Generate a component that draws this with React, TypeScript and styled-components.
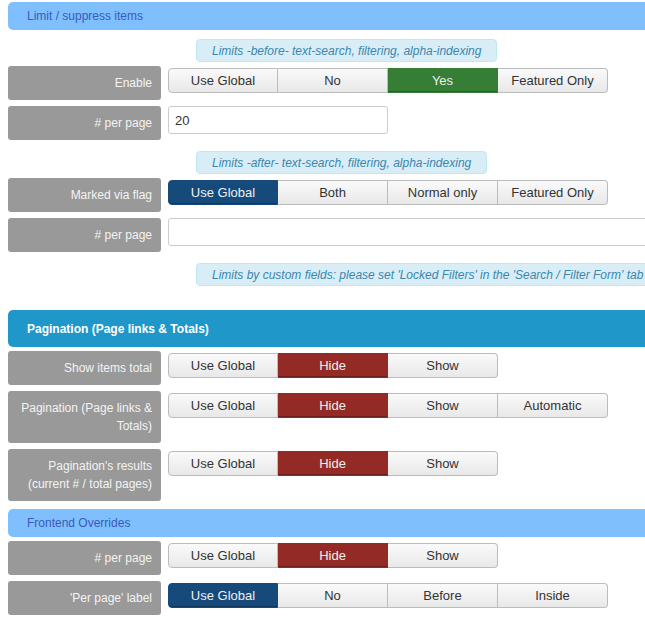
import React from "react";
import styled, { createGlobalStyle } from "styled-components";

const GlobalStyle = createGlobalStyle`
  body {
    margin: 0;
    background: #fff;
    overflow: hidden;
    font-family: "Liberation Sans", Arial, sans-serif;
    font-size: 13px;
    color: #333;
  }
`;

type Tone = "light" | "strong";
type Active = "success" | "danger" | "primary";

interface Choice {
  label: string;
  active?: Active;
}

const Page = styled.div`
  width: 760px;
  padding: 2px 0 0 8px;
`;

const Header = styled.div<{ $tone: Tone }>`
  display: flex;
  align-items: center;
  height: ${(p) => (p.$tone === "strong" ? "37px" : "28px")};
  padding-left: 19px;
  border-radius: 5px;
  background: ${(p) => (p.$tone === "strong" ? "#1f97c9" : "#7fbffd")};
  color: ${(p) => (p.$tone === "strong" ? "#fff" : "#3a5ab8")};
  font-weight: ${(p) => (p.$tone === "strong" ? "bold" : "normal")};
  font-size: 12px;
  margin-bottom: 4px;
`;

const Note = styled.div<{ $top: number; $bottom: number }>`
  margin: ${(p) => p.$top}px 0 ${(p) => p.$bottom}px 188px;
  width: fit-content;
  white-space: nowrap;
  height: 23px;
  box-sizing: border-box;
  padding: 0 15px;
  display: flex;
  align-items: center;
  background: #d9edf7;
  border: 1px solid #bce8f1;
  border-radius: 4px;
  color: #3a87ad;
  font-style: italic;
  font-size: 12px;
`;

const Row = styled.div`
  display: flex;
  align-items: flex-start;
  gap: 7px;
  margin-bottom: 6px;
`;

const Label = styled.div<{ $tall?: boolean }>`
  width: 153px;
  min-height: ${(p) => (p.$tall ? "52px" : "34px")};
  box-sizing: border-box;
  padding: ${(p) => (p.$tall ? "8px 9px 8px 4px" : "0 9px 0 4px")};
  display: flex;
  align-items: center;
  justify-content: flex-end;
  text-align: right;
  line-height: 18px;
  background: #999;
  border-radius: 3px;
  color: #f4f4f4;
  font-size: 12px;
  flex-shrink: 0;
`;

const Group = styled.div`
  display: flex;
  margin-top: 2px;
`;

const activeColors: Record<Active, string> = {
  success: "#367d35",
  danger: "#942a25",
  primary: "#154a7a",
};

const Btn = styled.button<{ $active?: Active }>`
  width: 110px;
  height: 25px;
  margin: 0;
  padding: 0;
  font-family: inherit;
  font-size: 13px;
  cursor: pointer;
  border: 1px solid ${(p) => (p.$active ? activeColors[p.$active] : "#bcbcbc")};
  border-left-width: 0;
  background: ${(p) =>
    p.$active
      ? activeColors[p.$active]
      : "linear-gradient(#fafafa, #e8e8e8)"};
  color: ${(p) => (p.$active ? "#f0f0f0" : "#333")};
  box-shadow: ${(p) => (p.$active ? "inset 0 -1px 0 rgba(0,0,0,0.25)" : "none")};

  &:first-child {
    border-left-width: 1px;
    border-radius: 4px 0 0 4px;
  }
  &:last-child {
    border-radius: 0 4px 4px 0;
  }
`;

const Field = styled.input<{ $wide?: boolean }>`
  width: ${(p) => (p.$wide ? "560px" : "220px")};
  height: 28px;
  box-sizing: border-box;
  margin: 0;
  padding: 0 6px;
  border: 1px solid #ccc;
  border-radius: 3px;
  font-family: inherit;
  font-size: 13px;
  color: #333;
`;

const Section = styled.div<{ $gap?: number }>`
  margin-top: ${(p) => p.$gap || 0}px;
`;

const Options = ({ items }: { items: Choice[] }) => (
  <Group>
    {items.map((c) => (
      <Btn key={c.label} $active={c.active}>
        {c.label}
      </Btn>
    ))}
  </Group>
);

const hideShow: Choice[] = [
  { label: "Use Global" },
  { label: "Hide", active: "danger" },
  { label: "Show" },
];

const App = () => {
  return (
    <>
      <GlobalStyle />
      <Page>
        <Header $tone="light">Limit / suppress items</Header>
        <Note $top={9} $bottom={4}>
          Limits -before- text-search, filtering, alpha-indexing
        </Note>
        <Row>
          <Label>Enable</Label>
          <Options
            items={[
              { label: "Use Global" },
              { label: "No" },
              { label: "Yes", active: "success" },
              { label: "Featured Only" },
            ]}
          />
        </Row>
        <Row>
          <Label># per page</Label>
          <Field defaultValue="20" />
        </Row>
        <Note $top={11} $bottom={4}>
          Limits -after- text-search, filtering, alpha-indexing
        </Note>
        <Row>
          <Label>Marked via flag</Label>
          <Options
            items={[
              { label: "Use Global", active: "primary" },
              { label: "Both" },
              { label: "Normal only" },
              { label: "Featured Only" },
            ]}
          />
        </Row>
        <Row>
          <Label># per page</Label>
          <Field $wide defaultValue="" />
        </Row>
        <Note $top={11} $bottom={0}>
          Limits by custom fields: please set 'Locked Filters' in the 'Search / Filter Form' tab
        </Note>

        <Section $gap={24}>
          <Header $tone="strong">Pagination (Page links &amp; Totals)</Header>
          <Row>
            <Label>Show items total</Label>
            <Options items={hideShow} />
          </Row>
          <Row>
            <Label $tall>Pagination (Page links &amp; Totals)</Label>
            <Options items={[...hideShow, { label: "Automatic" }]} />
          </Row>
          <Row>
            <Label $tall>Pagination's results (current # / total pages)</Label>
            <Options items={hideShow} />
          </Row>
        </Section>

        <Section $gap={8}>
          <Header $tone="light">Frontend Overrides</Header>
          <Row>
            <Label># per page</Label>
            <Options items={hideShow} />
          </Row>
          <Row>
            <Label>'Per page' label</Label>
            <Options
              items={[
                { label: "Use Global", active: "primary" },
                { label: "No" },
                { label: "Before" },
                { label: "Inside" },
              ]}
            />
          </Row>
        </Section>
      </Page>
    </>
  );
};

export default App;
